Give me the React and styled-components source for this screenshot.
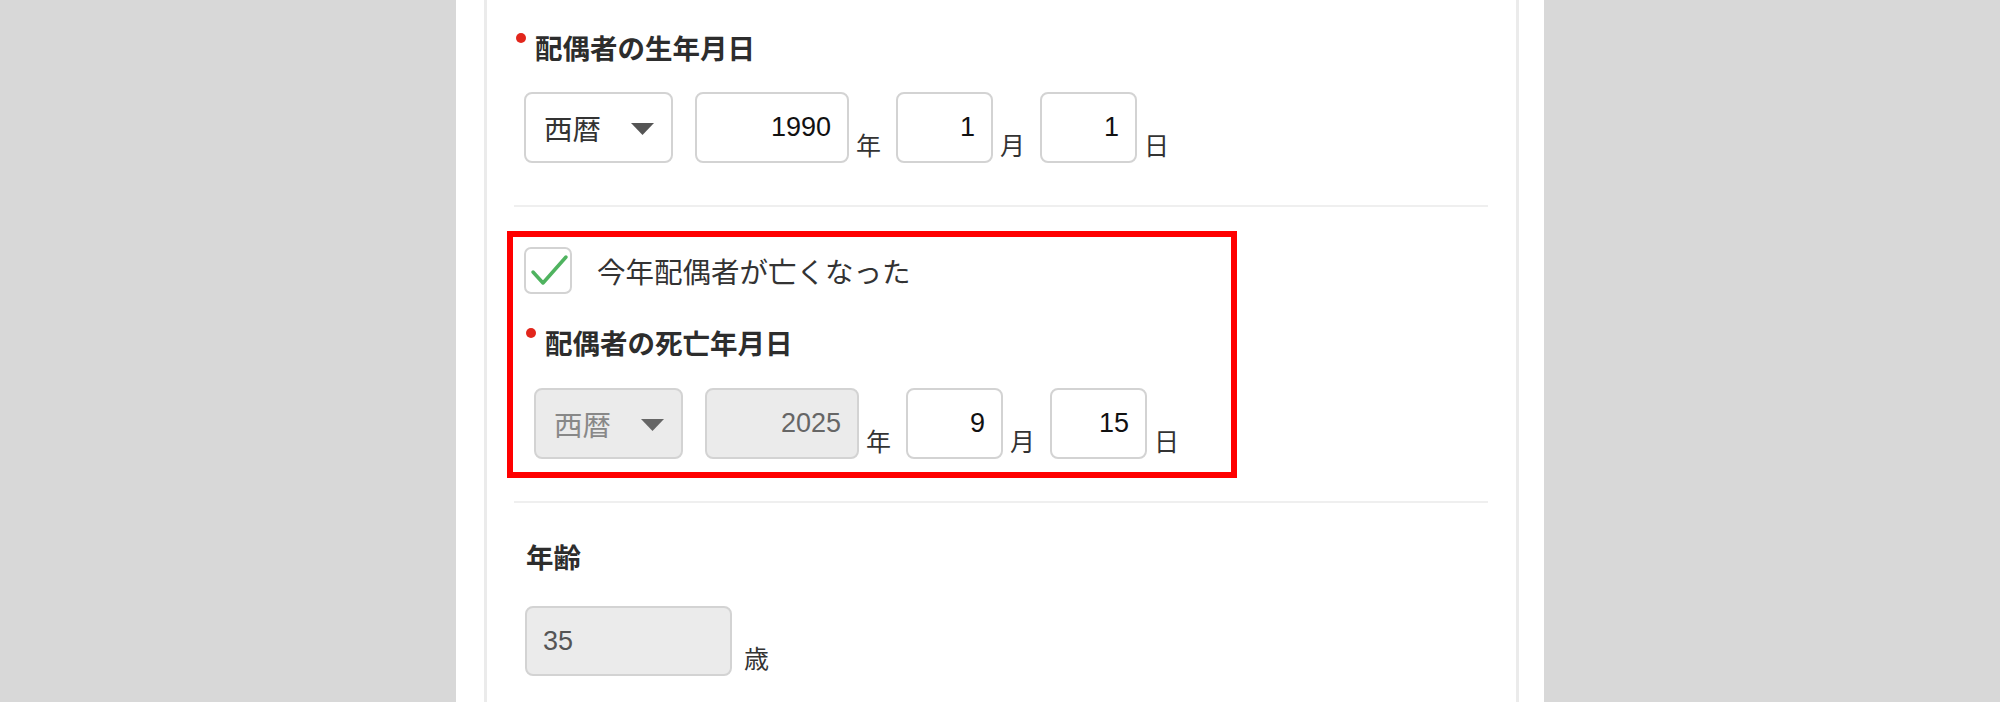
import React from "react";
import styled, { createGlobalStyle } from "styled-components";

const GlobalStyle = createGlobalStyle`
  body {
    margin: 0;
    background: #d8d8d8;
    font-family: "Noto Sans CJK JP", sans-serif;
    color: #333;
  }
`;

const DateRow = ({ era, year, month, day, locked }) => (
  <Row>
    <SelectBox $locked={locked}>
      <span>{era}</span>
      <svg width="23" height="12" viewBox="0 0 23 12">
        <polygon points="0,0 23,0 11.5,12" fill={locked ? "#666" : "#555"} />
      </svg>
    </SelectBox>
    <NumberInput $w={154} value={year} disabled={locked} readOnly />
    <Unit>年</Unit>
    <NumberInput $w={97} value={month} readOnly />
    <Unit>月</Unit>
    <NumberInput $w={97} value={day} readOnly />
    <Unit>日</Unit>
  </Row>
);

const App = () => {
  return (
    <>
      <GlobalStyle />
      <Panel>
        <Card>
          {/* 生年月日 */}
          <Section $top={30} $bottom={42} $left={10}>
            <FieldLabel $required $gap={28}>配偶者の生年月日</FieldLabel>
            <DateRow era="西暦" year="1990" month="1" day="1" />
          </Section>
          <Divider />

          {/* 死亡チェック（赤枠） */}
          <Highlight>
            <CheckRow>
              <CheckBox>
                <svg width="48" height="47" viewBox="0 0 48 47">
                  <polyline
                    points="9,25 19,36 42,10"
                    fill="none"
                    stroke="#4fb35f"
                    strokeWidth="3.5"
                    strokeLinecap="round"
                    strokeLinejoin="round"
                  />
                </svg>
              </CheckBox>
              <CheckText>今年配偶者が亡くなった</CheckText>
            </CheckRow>
            <SubSection>
              <FieldLabel $required $gap={29}>配偶者の死亡年月日</FieldLabel>
              <DateRow era="西暦" year="2025" month="9" day="15" locked />
            </SubSection>
          </Highlight>
          <Divider $top={23} />

          {/* 年齢 */}
          <Section $top={36} $bottom={20} $left={11}>
            <FieldLabel $gap={33}>年齢</FieldLabel>
            <Row>
              <AgeInput value="35" disabled readOnly />
              <Unit $gap={12}>歳</Unit>
            </Row>
          </Section>
        </Card>
      </Panel>
    </>
  );
};

export default App;

// Styled-components
const Panel = styled.div`
  width: 1088px;
  height: 702px;
  margin: 0 auto;
  padding: 0 25px 0 28px;
  box-sizing: border-box;
  background: #ffffff;
  display: flex;
  flex-direction: column;
  overflow: hidden;
`;

const Card = styled.div`
  flex: 1;
  border-left: 3px solid #ebebeb;
  border-right: 3px solid #ebebeb;
  padding: 0 28px 0 27px;
`;

const Section = styled.div`
  padding: ${(p) => p.$top}px 0 ${(p) => p.$bottom}px ${(p) => p.$left}px;
`;

const Divider = styled.div`
  height: 2px;
  background: #efefef;
  margin-top: ${(p) => p.$top || 0}px;
`;

const FieldLabel = styled.div`
  position: relative;
  padding-left: ${(p) => (p.$required ? 11 : 1)}px;
  margin-bottom: ${(p) => p.$gap || 26}px;
  font-size: 27.5px;
  line-height: 34px;
  font-weight: 700;
  color: #2d2d2d;

  &::before {
    content: "";
    display: ${(p) => (p.$required ? "block" : "none")};
    position: absolute;
    left: -8px;
    top: 3px;
    width: 10px;
    height: 10px;
    border-radius: 50%;
    background: #e2261c;
  }
`;

const Row = styled.div`
  display: flex;
  align-items: flex-end;
`;

const SelectBox = styled.div`
  width: 149px;
  height: 71px;
  box-sizing: border-box;
  margin-right: 22px;
  padding: 0 17px 0 18px;
  display: flex;
  align-items: center;
  justify-content: space-between;
  border: 2px solid #d3d3d3;
  border-radius: 8px;
  background: ${(p) => (p.$locked ? "#ebebeb" : "#ffffff")};
  color: ${(p) => (p.$locked ? "#888" : "#333")};
  font-size: 28.5px;

  svg {
    margin-top: 2px;
  }
`;

const NumberInput = styled.input`
  width: ${(p) => p.$w}px;
  height: 71px;
  box-sizing: border-box;
  margin: 0;
  padding: 0 16px 0 10px;
  border: 2px solid #d3d3d3;
  border-radius: 8px;
  background: #ffffff;
  color: #111;
  text-align: right;
  font-family: "Liberation Sans", Arial, sans-serif;
  font-size: 27px;
  outline: none;

  &:disabled {
    background: #ebebeb;
    color: #666;
  }
`;

const AgeInput = styled(NumberInput)`
  width: 207px;
  height: 70px;
  padding: 0 10px 0 16px;
  text-align: left;

  &:disabled {
    color: #555;
  }
`;

const Unit = styled.span`
  margin: 0 15px 6px ${(p) => p.$gap || 7}px;
  font-size: 25px;
  line-height: 25px;
  color: #333;
`;

const Highlight = styled.div`
  width: 730px;
  box-sizing: border-box;
  margin: 24px 0 0 -7px;
  padding: 10px 0 13px 11px;
  border: 6px solid #ff0000;
`;

const CheckRow = styled.div`
  display: flex;
  align-items: center;
  gap: 25px;
`;

const CheckBox = styled.div`
  width: 48px;
  height: 47px;
  box-sizing: border-box;
  border: 2px solid #d3d3d3;
  border-radius: 7px;
  background: #ffffff;
  display: flex;

  svg {
    margin: -2px;
  }
`;

const CheckText = styled.span`
  font-size: 28.5px;
  line-height: 36px;
  color: #333;
`;

const SubSection = styled.div`
  margin-top: 31px;
  padding-left: 10px;
`;
